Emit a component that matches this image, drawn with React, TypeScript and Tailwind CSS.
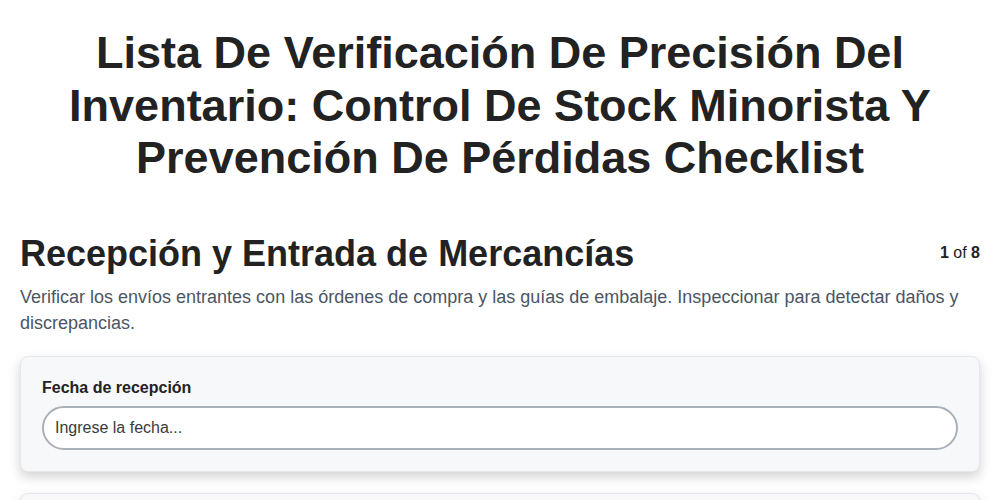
import React from "react"

const App: React.FC = () => {
  return (
    <div className="min-h-screen bg-white font-['Liberation_Sans',Arial,sans-serif] text-[#222]">
      <div className="px-5">
        <h1 className="mx-auto max-w-[900px] pt-[27px] text-center text-[45px] font-bold leading-[52.5px] text-[#222]">
          Lista De Verificación De Precisión Del Inventario: Control De Stock
          Minorista Y Prevención De Pérdidas Checklist
        </h1>

        <div className="mt-[47px] flex items-start justify-between">
          <h2 className="text-[36px] font-bold leading-[44px] text-[#222]">
            Recepción y Entrada de Mercancías
          </h2>
          <div className="pt-[9px] text-[16px] text-[#222]">
            <span className="font-bold">1</span> of <span className="font-bold">8</span>
          </div>
        </div>

        <p className="mt-[8px] text-[18px] leading-[26px] text-[#4b5563]">
          Verificar los envíos entrantes con las órdenes de compra y las guías de embalaje. Inspeccionar para detectar daños y discrepancias.
        </p>

        <div className="mt-[20px] flex flex-col gap-[21px]">
          <div className="rounded-lg border border-[#e5e7eb] bg-[#f7f8fa] px-[21px] pt-[21px] pb-[21px] shadow-[0_5px_12px_rgba(0,0,0,0.18)]">
            <label className="block text-[16px] font-bold leading-[20px] text-[#222]">
              Fecha de recepción
            </label>
            <input
              type="text"
              placeholder="Ingrese la fecha..."
              className="mt-[8px] h-[44px] w-full rounded-[22px] border-2 border-[#aab0b8] bg-white px-[11px] text-[16px] text-[#222] placeholder:text-[#3a3a3a] outline-none"
            />
          </div>
          <div className="h-[100px] rounded-lg border border-[#e5e7eb] bg-[#f7f8fa] shadow-[0_5px_12px_rgba(0,0,0,0.18)]" />
        </div>
      </div>
    </div>
  )
}

export default App
